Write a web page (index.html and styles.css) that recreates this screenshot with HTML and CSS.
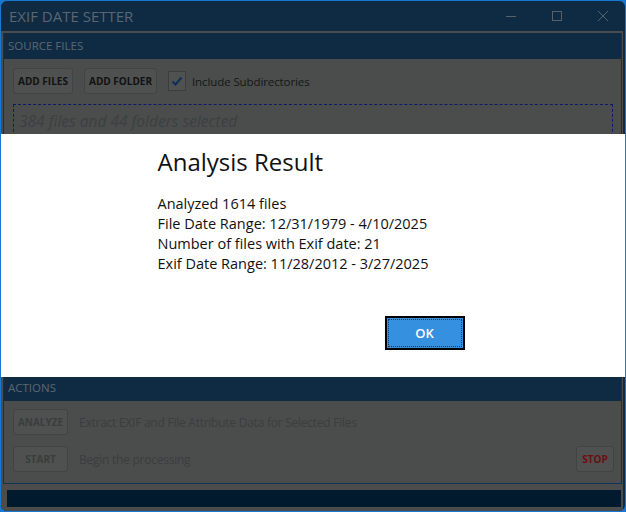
FILE: index.html
```html
<!DOCTYPE html>
<html>
<head>
<meta charset="utf-8">
<link rel="stylesheet" href="styles.css">
</head>
<body>
<div class="window">
  <div class="titlebar">
    <span class="title">EXIF DATE SETTER</span>
    <div class="controls">
      <svg class="ctl" width="12" height="12" viewBox="0 0 12 12"><path d="M1 6.5h10" stroke="#56626e" stroke-width="1" fill="none"/></svg>
      <svg class="ctl" width="12" height="12" viewBox="0 0 12 12"><rect x="1.5" y="1.5" width="9" height="9" stroke="#56626e" stroke-width="1" fill="none"/></svg>
      <svg class="ctl" width="12" height="12" viewBox="0 0 12 12"><path d="M1 1l10 10M11 1L1 11" stroke="#56626e" stroke-width="1" fill="none"/></svg>
    </div>
  </div>
  <div class="content">
    <section class="group group-source">
      <div class="group-header">SOURCE FILES</div>
      <div class="group-body">
        <div class="toolbar">
          <button class="btn btn-files">ADD FILES</button>
          <button class="btn btn-folder">ADD FOLDER</button>
          <label class="check">
            <span class="box"><svg width="14" height="14" viewBox="0 0 14 14"><path d="M2.5 7.5l3 3 6-7" stroke="#0b3157" stroke-width="2" fill="none"/></svg></span>
            <span class="check-label">Include Subdirectories</span>
          </label>
        </div>
        <div class="dropzone">
          <span class="selected">384 files and 44 folders selected</span>
        </div>
      </div>
    </section>
    <section class="group group-actions">
      <div class="group-header">ACTIONS</div>
      <div class="group-body actions-body">
        <div class="action-row">
          <button class="btn btn-disabled btn-wide">ANALYZE</button>
          <span class="action-label">Extract EXIF and File Attribute Data for Selected Files</span>
        </div>
        <div class="action-row">
          <button class="btn btn-disabled btn-wide">START</button>
          <span class="action-label">Begin the processing</span>
          <button class="btn btn-stop">STOP</button>
        </div>
      </div>
    </section>
    <div class="progress"></div>
  </div>
  <div class="dialog">
    <div class="dialog-inner">
      <h1 class="dialog-title">Analysis Result</h1>
      <div class="dialog-text">
        <div>Analyzed 1614 files</div>
        <div>File Date Range: 12/31/1979 - 4/10/2025</div>
        <div>Number of files with Exif date: 21</div>
        <div>Exif Date Range: 11/28/2012 - 3/27/2025</div>
      </div>
      <div class="dialog-actions">
        <button class="ok">OK</button>
      </div>
    </div>
  </div>
</div>
</body>
</html>
```

FILE: styles.css
```css
html, body {
  margin: 0;
  padding: 0;
  background: #1b78d0;
}
body {
  width: 626px;
  height: 512px;
  overflow: hidden;
  font-family: "Open Sans", "Noto Sans", sans-serif;
}
.window {
  position: relative;
  width: 626px;
  height: 512px;
  box-sizing: border-box;
  border: 1px solid #1b78d0;
  border-radius: 7px;
  background: #0f2b44;
  display: flex;
  flex-direction: column;
  overflow: hidden;
}
.titlebar {
  height: 30px;
  flex: none;
  display: flex;
  align-items: center;
  justify-content: space-between;
}
.title {
  margin-left: 8px;
  font-size: 15px;
  color: #5a6672;
}
.controls {
  display: flex;
  align-items: center;
  gap: 34px;
  margin-right: 16px;
}
.ctl { display: block; }
.content {
  flex: 1;
  background: #4a4d4b;
  margin-right: 2px;
  padding: 2px 1px 4px 2px;
  display: flex;
  flex-direction: column;
  min-height: 0;
}
.group {
  display: flex;
  flex-direction: column;
  border: 1px solid #123352;
  border-top: none;
}
.group-source {
  flex: 1;
  min-height: 0;
}
.group-header {
  height: 26px;
  background: #0f2b44;
  color: #5c6772;
  font-size: 11.5px;
  line-height: 26px;
  padding-left: 4px;
  flex: none;
}
.group-body {
  background: #4a4d4b;
  padding: 9px 8px 0 9px;
  flex: 1;
}
.toolbar {
  display: flex;
  align-items: center;
  gap: 11px;
}
.btn {
  height: 26px;
  box-sizing: border-box;
  border: 1px solid #414443;
  border-radius: 3px;
  background: #4e5150;
  font-family: "Open Sans", sans-serif;
  font-weight: 700;
  font-size: 10px;
  color: #121212;
  padding: 0;
}
.btn-files { width: 60px; }
.btn-folder { width: 73px; }
.check {
  display: flex;
  align-items: center;
  gap: 6px;
}
.box {
  width: 18px;
  height: 20px;
  box-sizing: border-box;
  border: 1px solid #3b3e3e;
  background: #4f5251;
  display: flex;
  align-items: center;
  justify-content: center;
}
.box svg { display: block; }
.check-label {
  font-size: 11.5px;
  letter-spacing: -0.1px;
  color: #151717;
}
.dropzone {
  margin-top: 10px;
  height: 120px;
  border: 1px dashed #0d1a6b;
  padding: 5px 5px 0;
}
.selected {
  font-style: italic;
  font-size: 15.5px;
  color: #3b4042;
}
.group-actions {
  flex: none;
}
.actions-body {
  padding: 8px 7px 11px 9px;
  display: flex;
  flex-direction: column;
  gap: 11px;
}
.action-row {
  display: flex;
  align-items: center;
  gap: 11px;
}
.btn-wide { width: 55px; }
.btn-disabled { color: #3a3d3d; }
.action-label {
  flex: 1;
  font-size: 12px;
  letter-spacing: -0.25px;
  color: #3a3e40;
}
.btn-stop {
  width: 38px;
  color: #6a0f10;
}
.progress {
  height: 17px;
  background: #011a2e;
  margin: 6px 1px 0 4px;
  flex: none;
}
.dialog {
  position: absolute;
  left: -1px;
  top: 133px;
  width: 625px;
  height: 243px;
  background: #ffffff;
}
.dialog-inner {
  width: 312px;
  margin: 0 auto;
  padding-top: 12px;
  padding-left: 1px;
  box-sizing: border-box;
}
.dialog-title {
  margin: 0;
  font-weight: 400;
  font-size: 24px;
  line-height: 32px;
  color: #111;
}
.dialog-text {
  margin-top: 16px;
  font-size: 14.5px;
  line-height: 20px;
  color: #111;
}
.dialog-actions {
  display: flex;
  justify-content: flex-end;
  margin-top: 42px;
  padding-right: 4px;
}
.ok {
  width: 80px;
  height: 34px;
  box-sizing: border-box;
  border: 2px solid #000;
  background: #3591e0;
  color: #fff;
  font-family: "Open Sans", sans-serif;
  font-weight: 600;
  font-size: 13px;
  outline: 1px dotted #143a64;
  outline-offset: -4px;
}
```
